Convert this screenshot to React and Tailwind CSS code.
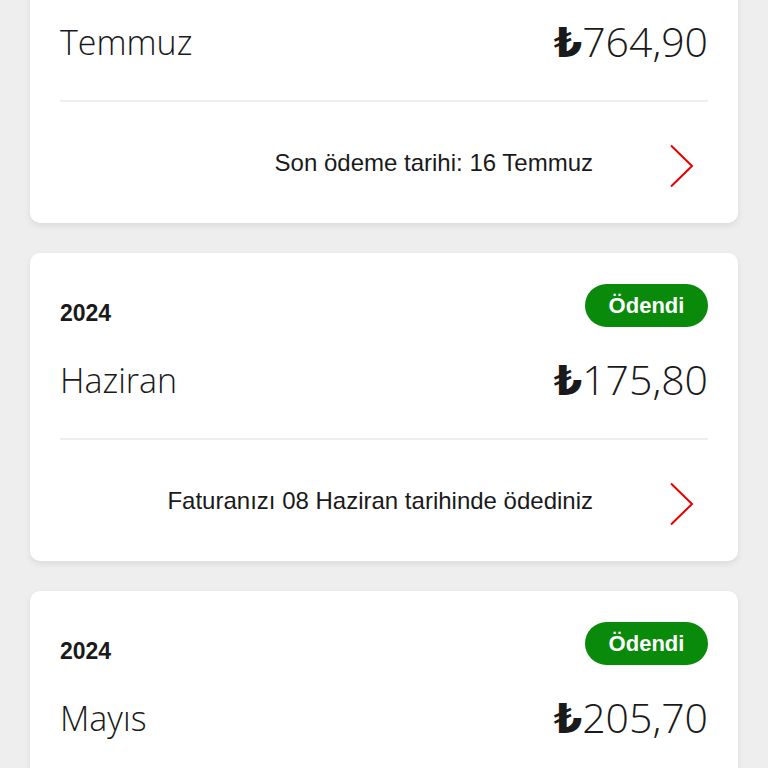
import React from 'react';

const bills = [
  { year: '2024', month: 'Temmuz', amount: '764,90', note: 'Son ödeme tarihi: 16 Temmuz', paid: false, hidden: true },
  { year: '2024', month: 'Haziran', amount: '175,80', note: 'Faturanızı 08 Haziran tarihinde ödediniz', paid: true },
  { year: '2024', month: 'Mayıs', amount: '205,70', note: 'Faturanızı 08 Mayıs tarihinde ödediniz', paid: true },
];

const Chevron = () => (
  <svg width="26" height="44" viewBox="0 0 26 44" fill="none" className="mr-[13px] mt-[6px]">
    <path d="M2 1.5 L23 22 L2 42.5" stroke="#e60000" strokeWidth="2" strokeLinejoin="miter" />
  </svg>
);

const BillCard = ({ bill }) => (
  <div className="bg-white rounded-[10px] shadow-[0_3px_6px_rgba(0,0,0,0.08)] px-[30px] pt-[31px]">
    <div className="flex justify-between items-end h-[43px]">
      {!bill.hidden && (
        <span className="font-bold text-[23px] leading-none pb-[2px] text-[#1a1a1a]">{bill.year}</span>
      )}
      {bill.paid && (
        <span className="h-[43px] w-[123px] rounded-full bg-[#0a8a0a] text-white font-bold text-[22px] flex items-center justify-center">
          Ödendi
        </span>
      )}
    </div>
    <div className="flex justify-between items-center h-[50px] mt-[28px]">
      <span className="font-['Open_Sans',sans-serif] font-light text-[34px] text-[#1a1a1a] leading-none">{bill.month}</span>
      <span className="font-['Open_Sans',sans-serif] font-light text-[41px] text-[#1a1a1a] leading-none">
        <span className="font-['DejaVu_Sans',sans-serif] font-bold">₺</span>{bill.amount}
      </span>
    </div>
    <div className="h-[2px] bg-[#eeeeee] mt-[33px]" />
    <div className="flex justify-end items-center h-[121px]">
      <span className="text-[24px] text-[#1a1a1a] mr-[76px]">{bill.note}</span>
      <Chevron />
    </div>
  </div>
);

export default function App() {
  return (
    <div className="w-[768px] h-[768px] overflow-hidden bg-[#eeeeee] font-['Liberation_Sans',sans-serif]">
      <div className="flex flex-col gap-[30px] px-[30px] -mt-[85px]">
        {bills.map((b) => (
          <BillCard key={b.month} bill={b} />
        ))}
      </div>
    </div>
  );
}
